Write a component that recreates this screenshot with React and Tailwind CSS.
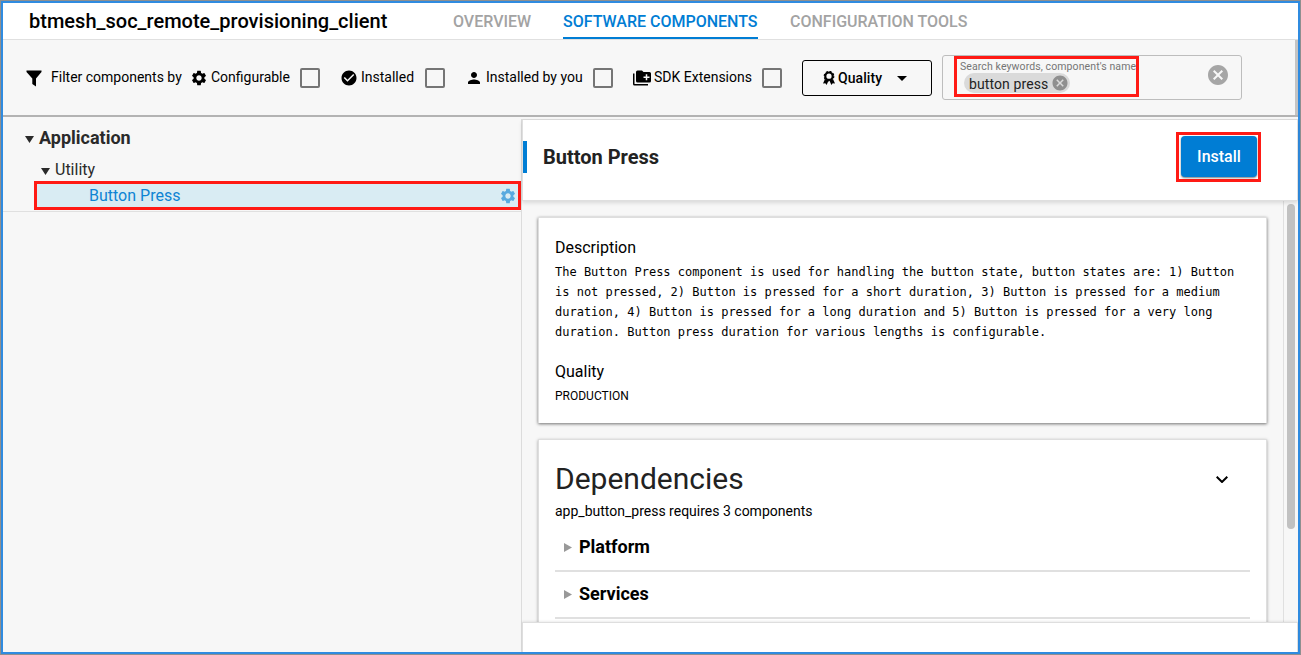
import { MdSettings, MdCheckCircle, MdPerson, MdCancel } from "react-icons/md";

function Check({ className }) {
  return <span className={`box-border size-5 shrink-0 rounded-[2px] border-2 border-[#757575] ${className}`} />;
}

function Filter({ icon, label, className }) {
  return (
    <div className={`mt-7 flex h-5 shrink-0 items-center ${className}`}>
      {icon}
      <span className="ml-[3px] whitespace-nowrap pb-0.5">{label}</span>
      <Check className="ml-auto" />
    </div>
  );
}

function Dependency({ name }) {
  return (
    <div className="flex h-[47px] items-center border-b-2 border-[#e0e0e0] pl-[9px] text-[18px] font-bold leading-6 text-black">
      <svg className="mr-[7px] h-[9px] w-2" viewBox="0 0 8 9"><path fill="#999" d="M0 0L8 4.5L0 9Z" /></svg>
      <span className="pb-0.5">{name}</span>
    </div>
  );
}

export default function App() {
  return (
    <div className="relative h-[655px] w-[1301px] overflow-hidden border border-[#8f8f8f] bg-[#f7f7f7] font-['Roboto',sans-serif] text-black">
      <div className="absolute -top-px left-[1063px] h-px w-[133px] bg-[#2f8be0]" />
      <div className="flex h-full flex-col border-2 border-[#2f8be0]">
        <header className="flex h-[37px] shrink-0 border-b border-[#e0e0e0] bg-white pl-[26px]">
          <h1 className="w-[424px] pt-[3px] text-[20px] font-medium leading-[30px] tracking-[0.01px]">btmesh_soc_remote_provisioning_client</h1>
          <nav className="flex gap-8 whitespace-nowrap text-[16px] font-medium leading-[37px] text-[#a3a3a3]">
            <span className="w-[78px]">OVERVIEW</span>
            <span className="h-9 w-[195px] border-b-2 border-[#007dd4] text-[#007dd4]">SOFTWARE COMPONENTS</span>
            <span>CONFIGURATION TOOLS</span>
          </nav>
        </header>

        <div className="relative flex h-[77px] shrink-0 items-start border-b-2 border-[#b3b3b3] text-[14px] leading-5">
          <div className="ml-[23px] mt-7 flex h-5 w-[164px] items-center">
            <svg className="mr-[9px] h-[17px] w-4" viewBox="0 0 16 17"><path d="M.5 .5H15.500V2L10 8.500V16.500L6.300 14V8.500L.5 2Z" /></svg>
            <span className="whitespace-nowrap pb-0.5">Filter components by</span>
          </div>
          <Filter className="w-[130px]" label="Configurable" icon={<MdSettings className="size-[18px]" />} />
          <Filter className="ml-5 w-[105px]" label="Installed" icon={<MdCheckCircle className="size-[18px]" />} />
          <Filter className="ml-5 w-[148px]" label="Installed by you" icon={<MdPerson className="size-[18px]" />} />
          <Filter
            className="ml-5 w-[149px]"
            label="SDK Extensions"
            icon={<svg className="size-[18px]" viewBox="0 0 24 24"><path fillRule="evenodd" d="M22 4H14L12 2H6A2 2 0 0 0 4 4V16A2 2 0 0 0 6 18H22A2 2 0 0 0 24 16V6A2 2 0 0 0 22 4M2 6H0V20A2 2 0 0 0 2 22H20V20H2V6M22 12H19V15H17V12H14V10H17V7H19V10H22Z" /></svg>}
          />
          <button className="ml-5 mt-5 flex h-9 w-[130px] shrink-0 items-center rounded-[3px] border border-black pl-5 text-[14px] font-medium">
            <svg className="mr-[3px] h-[14px] w-3" viewBox="0 0 12 14">
              <circle cx="6" cy="5.2" r="3.700" fill="none" stroke="#000" strokeWidth="2.2" />
              <circle cx="6" cy="5.2" r="4.800" fill="none" stroke="#000" strokeWidth="1.2" strokeDasharray="2 1.77" />
              <path d="M2 8L0 12.500L2.300 12.300L3.600 14L5.600 9.500ZM10 8L12 12.500L9.700 12.300L8.400 14L6.400 9.500Z" />
            </svg>
            <span className="tracking-[0.07px]">Quality</span>
            <svg className="ml-[15px] h-[5px] w-[10px]" viewBox="0 0 10 5"><path d="M0 0H10L5 5Z" /></svg>
          </button>
          <div className="relative ml-[10px] mt-[15px] h-[45px] w-[300px] shrink-0 rounded-[3px] border border-[#bdbdbd]">
            <div className="ml-[17px] mt-1 whitespace-nowrap text-[10.5px] leading-[14px] tracking-[0.1px] text-[#757575]">Search keywords, component's name</div>
            <div className="-mt-px ml-[21px] flex h-5 w-[106px] items-center rounded-full bg-[#dadada] pl-[5px] text-[14px] text-[#222]">
              <span className="whitespace-nowrap pt-0.5 tracking-[0.1px]">button press</span>
              <MdCancel className="ml-auto mr-px size-[18px] text-[#8f8f8f]" />
            </div>
            <MdCancel className="absolute left-[263px] top-[7px] size-6 text-[#a6a6a6]" />
            <div className="absolute left-[11px] top-0 h-[41px] w-[185px] border-[3px] border-[#ff1a14]" />
          </div>
          <div className="absolute right-0 top-0 h-[75px] w-[3px] bg-[#c4c4c4]" />
        </div>

        <main className="flex min-h-0 flex-1">
          <aside className="w-[518px] shrink-0 text-[#2a2a2a]">
            <div className="flex h-[42px] items-center pl-[22px] text-[18px] font-bold">
              <svg className="mr-[5px] mt-0.5 h-[7px] w-[9px]" viewBox="0 0 9 7"><path fill="#2a2a2a" d="M0 0H9L4.500 7Z" /></svg>
              <span className="pb-0.5">Application</span>
            </div>
            <div className="flex h-[22px] items-center pl-[38px] text-[16px]">
              <svg className="mr-[5px] mt-0.5 h-[7px] w-[9px]" viewBox="0 0 9 7"><path fill="#2a2a2a" d="M0 0H9L4.500 7Z" /></svg>
              Utility
            </div>
            <div className="h-[31px] border-b border-[#e0e0e0] pl-[31px]">
              <div className="flex h-[29px] w-[487px] items-center justify-between border-[3px] border-[#ff1a14] bg-[#d9ecf3] pl-[52px] text-[16px] text-[#0e84d3]">
                <span>Button Press</span>
                <MdSettings className="mr-px size-[18px] text-[#58aadf]" />
              </div>
            </div>
          </aside>

          <section className="mt-0.5 flex min-w-0 flex-1 flex-col border-l border-t border-[#dcdcdc]">
            <div className="relative z-10 flex h-[81px] shrink-0 border-b border-l border-r border-[#dfdfdf] bg-white shadow-[0_2px_4px_rgba(0,0,0,0.12)]">
              <div className="mt-[21px] h-8 w-1 bg-[#007dd4]" />
              <h2 className="ml-4 mt-[21px] text-[20px] font-bold leading-8 text-[#222]">Button Press</h2>
              <div className="ml-auto mr-9 mt-3 h-[50px] w-[85px] border-[3px] border-[#ff1a14] p-px pr-0">
                <button className="ml-px h-[41px] w-[76px] rounded-[4px] bg-[#007dd4] text-[16px] font-medium text-white shadow-[0_1px_2px_rgba(0,0,0,0.5)]">Install</button>
              </div>
            </div>

            <div className="flex min-h-0 flex-1 overflow-hidden">
              <div className="flex-1 pl-4 pt-4">
                <article className="h-[206px] w-[729px] border border-b-0 border-[#dedede] bg-white px-4 pt-5 shadow-[0_1px_3px_rgba(0,0,0,0.55)]">
                  <h3 className="text-[16px] leading-5">Description</h3>
                  <p className="mt-1 whitespace-pre font-['DejaVu_Sans_Mono',monospace] text-[12px] leading-5">
                    {"The Button Press component is used for handling the button state, button states are: 1) Button\nis not pressed, 2) Button is pressed for a short duration, 3) Button is pressed for a medium\nduration, 4) Button is pressed for a long duration and 5) Button is pressed for a very long\nduration. Button press duration for various lengths is configurable."}
                  </p>
                  <h3 className="mt-5 text-[16px] leading-5">Quality</h3>
                  <p className="mt-1 text-[12px] leading-5">PRODUCTION</p>
                </article>
                <article className="mt-4 h-[230px] w-[729px] border border-[#dedede] bg-white px-4 pt-[19px] shadow-[0_1px_3px_rgba(0,0,0,0.35)]">
                  <div className="flex items-center justify-between pr-[22px]">
                    <h2 className="text-[30px] leading-[40px] text-[#222]">Dependencies</h2>
                    <svg className="h-[7px] w-3" viewBox="0 0 12 7"><path fill="none" stroke="#000" strokeWidth="2" d="M.7 .7L6 6L11.300 .7" /></svg>
                  </div>
                  <p className="mt-0.5 text-[14px] leading-5">app_button_press requires 3 components</p>
                  <div className="mt-1">
                    <Dependency name="Platform" />
                    <Dependency name="Services" />
                  </div>
                </article>
              </div>
              <div className="w-[15px] border-l border-[#e0e0e0] pl-[3px] pt-[3px]">
                <div className="h-[325px] w-2 rounded-full bg-[#c1c1c1]" />
              </div>
            </div>
            <footer className="relative z-10 h-[30px] shrink-0 border-x border-t border-[#dedede] bg-white shadow-[0_-1px_2px_rgba(0,0,0,0.08)]" />
          </section>
        </main>
      </div>
    </div>
  );
}
